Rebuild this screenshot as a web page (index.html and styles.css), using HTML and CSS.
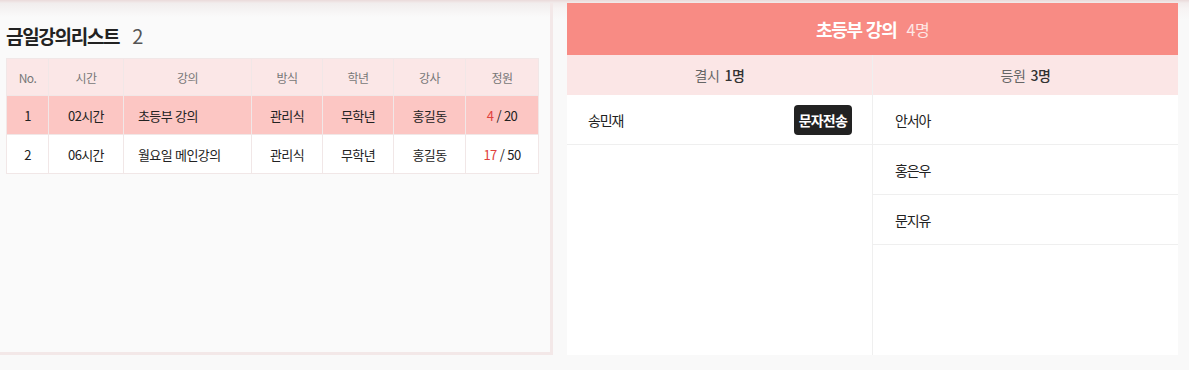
FILE: index.html
```html
<!DOCTYPE html>
<html lang="ko">
<head>
  <meta charset="UTF-8" />
  <meta name="viewport" content="width=device-width, initial-scale=1.0"/>
  <title>금일강의리스트</title>
  <link rel="stylesheet" href="styles.css">
</head>
<body>
  <div class="wrap">
    <section class="list-panel">
      <h2 class="list-title">금일강의리스트 <span class="count">2</span></h2>
      <table class="lecture-table">
        <colgroup>
          <col style="width:42px">
          <col style="width:75px">
          <col style="width:128px">
          <col style="width:71px">
          <col style="width:71px">
          <col style="width:72px">
          <col style="width:73px">
        </colgroup>
        <thead>
          <tr>
            <th>No.</th>
            <th>시간</th>
            <th>강의</th>
            <th>방식</th>
            <th>학년</th>
            <th>강사</th>
            <th>정원</th>
          </tr>
        </thead>
        <tbody>
          <tr class="active">
            <td>1</td>
            <td>02시간</td>
            <td class="name">초등부 강의</td>
            <td>관리식</td>
            <td>무학년</td>
            <td>홍길동</td>
            <td><span class="cur">4</span> / 20</td>
          </tr>
          <tr>
            <td>2</td>
            <td>06시간</td>
            <td class="name">월요일 메인강의</td>
            <td>관리식</td>
            <td>무학년</td>
            <td>홍길동</td>
            <td><span class="cur">17</span> / 50</td>
          </tr>
        </tbody>
      </table>
    </section>

    <section class="detail-panel">
      <div class="detail-head">초등부 강의 <span class="total">4명</span></div>
      <div class="detail-body">
        <div class="col absent">
          <div class="col-head">결시 <b>1명</b></div>
          <div class="person">
            <span>송민재</span>
            <button class="sms">문자전송</button>
          </div>
        </div>
        <div class="col present">
          <div class="col-head">등원 <b>3명</b></div>
          <div class="person"><span>안서아</span></div>
          <div class="person"><span>홍은우</span></div>
          <div class="person"><span>문지유</span></div>
        </div>
      </div>
    </section>
  </div>
</body>
</html>
```

FILE: styles.css
```css
* {
  box-sizing: border-box;
}
body {
  margin: 0;
  height: 370px;
  font-family: "Noto Sans CJK KR", "Noto Sans", sans-serif;
  color: #222;
  background: linear-gradient(#eadada 0, #f2ecec 3px, #f7f4f4 9px, #f9f9f9 20px) no-repeat, #f9f9f9;
}
.wrap {
  display: flex;
  align-items: flex-start;
  padding-top: 3px;
}
.list-panel {
  width: 553px;
  height: 352px;
  background: linear-gradient(#f1eded 0, #fafafa 14px) no-repeat, #fafafa;
  border-right: 3px solid #f3e8e8;
  border-bottom: 3px solid #f3e8e8;
}
.list-title {
  margin: 0;
  padding: 20px 0 9px 6px;
  line-height: 26px;
  font-size: 19px;
  font-weight: 700;
  letter-spacing: -1.3px;
  color: #222;
}
.list-title .count {
  margin-left: 9px;
  font-size: 20px;
  font-weight: 400;
  color: #555;
  letter-spacing: 0;
}
.lecture-table {
  margin-left: 6px;
  width: 532px;
  table-layout: fixed;
  border-collapse: collapse;
  background: #fff;
  font-size: 13px;
}
.lecture-table th,
.lecture-table td {
  border: 1px solid #f1e7e7;
  text-align: center;
  padding: 0;
  letter-spacing: -0.6px;
}
.lecture-table th {
  height: 37px;
  background: #fbe7e7;
  color: #777;
  font-weight: 400;
  font-size: 12px;
}
.lecture-table td {
  height: 39px;
  color: #222;
}
.lecture-table td.name {
  text-align: left;
  padding-left: 14px;
}
.lecture-table tr.active td {
  background: #fcc6c3;
}
.lecture-table .cur {
  color: #e0413c;
}
.detail-panel {
  margin-left: 14px;
  width: 611px;
  height: 352px;
  background: #fff;
  display: flex;
  flex-direction: column;
}
.detail-head {
  height: 52px;
  background: #f88b84;
  color: #fff;
  display: flex;
  align-items: center;
  justify-content: center;
  font-size: 18px;
  font-weight: 700;
  letter-spacing: -1.2px;
}
.detail-head .total {
  margin-left: 10px;
  font-size: 16px;
  font-weight: 400;
  color: #fee8e6;
  letter-spacing: -0.5px;
}
.detail-body {
  flex: 1;
  display: flex;
}
.col {
  display: flex;
  flex-direction: column;
}
.col.absent {
  width: 306px;
  border-right: 1px solid #efefef;
}
.col.present {
  flex: 1;
}
.col-head {
  height: 40px;
  background: #fbe6e6;
  display: flex;
  align-items: center;
  justify-content: center;
  font-size: 14px;
  color: #666;
  letter-spacing: -0.4px;
}
.col-head b {
  margin-left: 5px;
  color: #333;
  font-weight: 500;
}
.person {
  height: 50px;
  border-bottom: 1px solid #efefef;
  display: flex;
  align-items: center;
  justify-content: space-between;
  padding: 0 20px 0 21px;
  font-size: 14px;
  letter-spacing: -1.1px;
}
.present .person {
  padding-left: 22px;
}
.sms {
  height: 30px;
  padding: 0 5px;
  border: none;
  border-radius: 4px;
  background: #222;
  color: #fff;
  font-family: inherit;
  font-size: 14px;
  font-weight: 700;
  letter-spacing: -0.8px;
}
```
